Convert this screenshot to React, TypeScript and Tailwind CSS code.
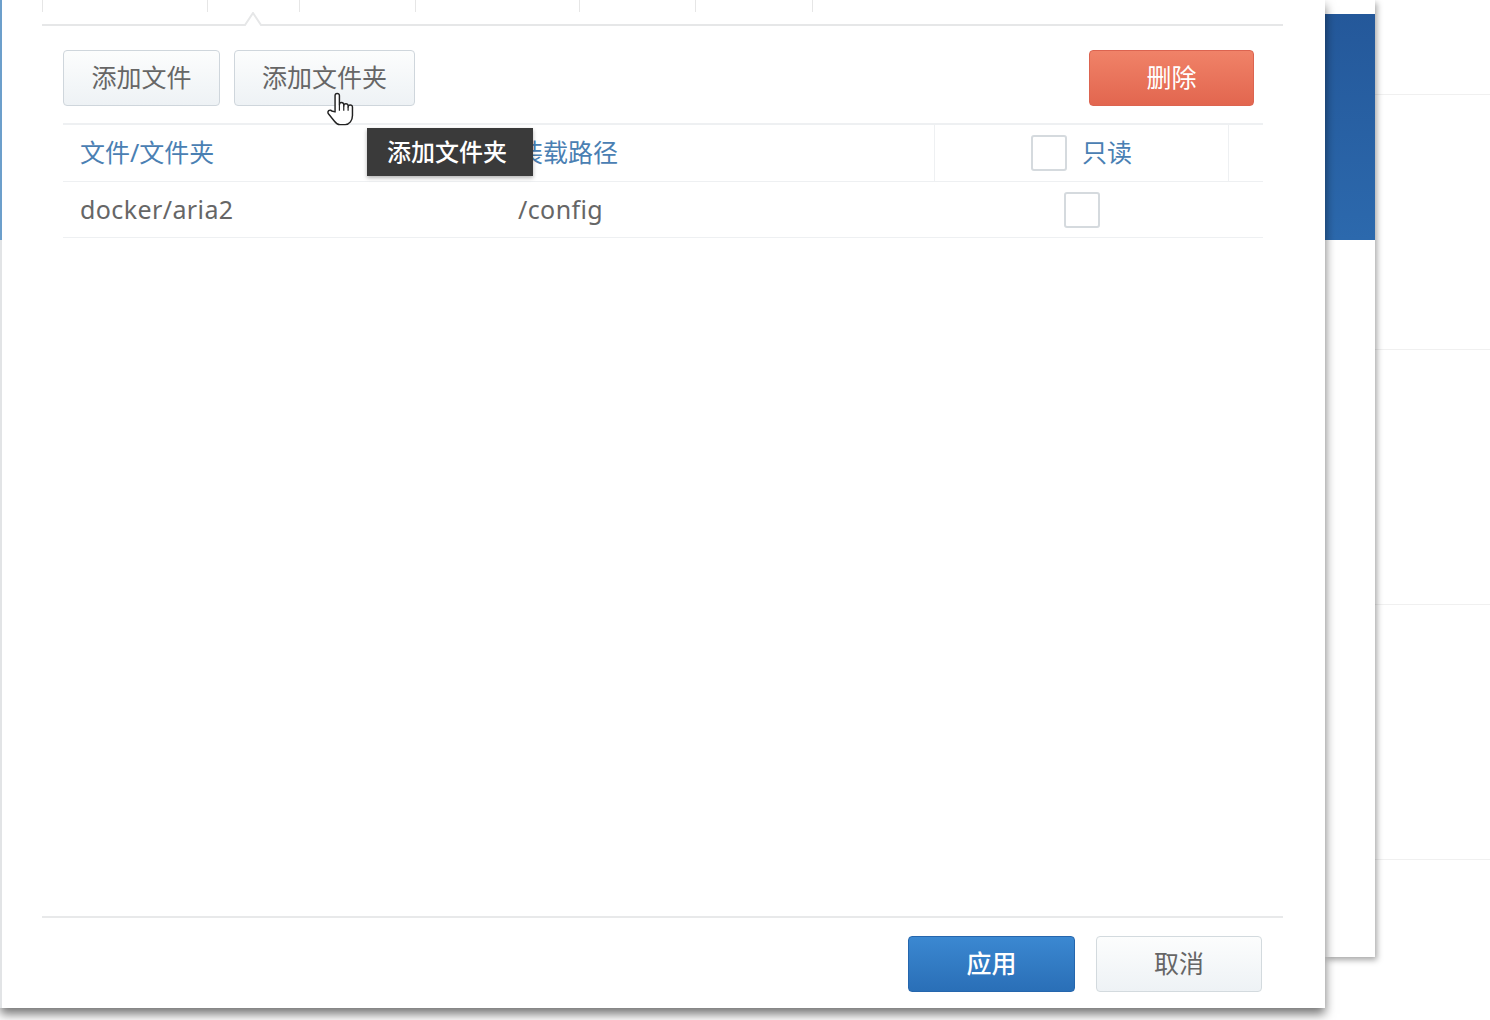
import React from "react";

const font = { fontFamily: '"Noto Sans", "Noto Sans CJK SC", sans-serif' };

function Checkbox() {
  return <div className="w-[36px] h-[36px] rounded-[3px] border-2 border-[#d5dade] bg-white shrink-0" />;
}

function HandCursor() {
  return (
    <svg width="29" height="37" viewBox="0 0 24 30" className="absolute left-[326px] top-[91px] z-30">
      <path
        d="M7.5 17 V3.5 a1.8 1.8 0 0 1 3.6 0 V11 a1.8 1.8 0 0 1 3.6 0 V12 a1.8 1.8 0 0 1 3.6 0 V13 a1.8 1.8 0 0 1 3.6 0 V20 c0 4 -2.5 7.5 -6 7.5 H11.5 c-2 0 -3.2 -1 -4.5 -2.8 L2 18.5 a1.8 1.8 0 0 1 2.8 -2.3 Z"
        fill="#fff"
        stroke="#222"
        strokeWidth="1.2"
        strokeLinejoin="round"
      />
      <path d="M11.1 11 V16 M14.7 12 V16 M18.3 13 V16" stroke="#222" strokeWidth="1" fill="none" />
    </svg>
  );
}

export default function App() {
  const tabs = [165, 92, 116, 164, 116, 117, 120];
  return (
    <div className="relative flex w-[1490px] h-[1020px] overflow-hidden bg-white" style={font}>
      {/* main dialog */}
      <div className="relative z-20 flex w-[1325px] h-[1008px] shrink-0 bg-white shadow-[0_6px_10px_rgba(0,0,0,0.55)]">
        <div className="flex flex-col w-[2px] shrink-0">
          <div className="h-[240px] bg-[#6c9fcb]" />
          <div className="flex-1 bg-[#e2e4e6]" />
        </div>
        <div className="flex flex-col flex-1 pl-[40px] pr-[42px]">
          {/* tab bar remnants */}
          <div className="flex h-[24px]">
            {tabs.map((w, i) => (
              <div key={i} className="h-[12px] border-l border-[#e6e6e6] shrink-0" style={{ width: w }} />
            ))}
          </div>
          <div className="flex items-end h-[14px] -mt-[12px]">
            <div className="w-[199px] h-[2px] bg-[#e6e7e8]" />
            <svg width="24" height="14" viewBox="0 0 24 14" className="shrink-0">
              <path d="M0 13 H4 L12 1 L20 13 H24" fill="none" stroke="#e6e7e8" strokeWidth="2" />
            </svg>
            <div className="flex-1 h-[2px] bg-[#e6e7e8]" />
          </div>

          {/* toolbar */}
          <div className="flex items-center mt-[24px] pl-[21px] pr-[29px]">
            <button className="h-[56px] w-[157px] rounded-[4px] border border-[#cfd6dc] bg-gradient-to-b from-[#fcfdfd] to-[#eef2f5] text-[25px] text-[#666]">
              添加文件
            </button>
            <button className="ml-[14px] h-[56px] w-[181px] rounded-[4px] border border-[#cfd6dc] bg-gradient-to-b from-[#fcfdfd] to-[#eef2f5] text-[25px] text-[#666]">
              添加文件夹
            </button>
            <div className="flex-1" />
            <button className="h-[56px] w-[165px] rounded-[4px] border border-[#dc6450] bg-gradient-to-b from-[#f08268] to-[#e2664f] text-[25px] text-white">
              删除
            </button>
          </div>

          {/* table */}
          <div className="mt-[17px] ml-[21px] mr-[20px] border-t-2 border-[#eef0f2]">
            <div className="flex h-[57px] border-b border-[#eef0f2] text-[25px] text-[#4a80b3]">
              <div className="w-[438px] pl-[17px] flex items-center">文件/文件夹</div>
              <div className="w-[433px] pl-[17px] flex items-center">装载路径</div>
              <div className="w-[295px] flex items-center justify-center gap-[15px] border-l border-r border-[#eef0f2]">
                <Checkbox />
                <span>只读</span>
              </div>
              <div className="flex-1" />
            </div>
            <div className="flex h-[56px] border-b border-[#eef0f2] text-[25px] text-[#666] tracking-[0.4px]">
              <div className="w-[438px] pl-[17px] flex items-center">docker/aria2</div>
              <div className="w-[433px] pl-[17px] flex items-center">/config</div>
              <div className="w-[295px] flex items-center justify-center">
                <Checkbox />
              </div>
              <div className="flex-1" />
            </div>
          </div>

          <div className="flex-1" />

          {/* footer */}
          <div className="h-[2px] bg-[#e8e9ea]" />
          <div className="flex justify-end gap-[21px] mt-[18px] mb-[16px] pr-[21px]">
            <button className="h-[56px] w-[167px] rounded-[4px] border border-[#2566ad] bg-gradient-to-b from-[#3b88d1] to-[#2a6fb7] text-[25px] text-white font-medium">
              应用
            </button>
            <button className="h-[56px] w-[166px] rounded-[4px] border border-[#d3dade] bg-gradient-to-b from-[#fcfdfd] to-[#eef2f5] text-[25px] text-[#666]">
              取消
            </button>
          </div>
        </div>

        {/* tooltip */}
        <div className="absolute left-[367px] top-[128px] z-30 w-[166px] h-[48px] bg-[#3a3a3a] text-white text-[24px] font-medium flex items-center pl-[20px] shadow-[0_2px_4px_rgba(0,0,0,0.3)]">
          添加文件夹
        </div>
        <HandCursor />
      </div>

      {/* second window */}
      <div className="relative z-10 flex flex-col w-[50px] h-[957px] shrink-0 bg-white shadow-[2px_3px_6px_rgba(0,0,0,0.35)]">
        <div className="h-[14px]" />
        <div className="h-[226px] bg-gradient-to-b from-[#24589a] to-[#2c69ad]" />
      </div>

      {/* background window */}
      <div className="flex flex-col flex-1 bg-white pt-[94px]">
        <div className="h-[255px] border-t border-[#f0f0f0]" />
        <div className="h-[255px] border-t border-[#f0f0f0]" />
        <div className="h-[255px] border-t border-[#f0f0f0]" />
        <div className="flex-1 border-t border-[#f0f0f0]" />
      </div>
    </div>
  );
}
